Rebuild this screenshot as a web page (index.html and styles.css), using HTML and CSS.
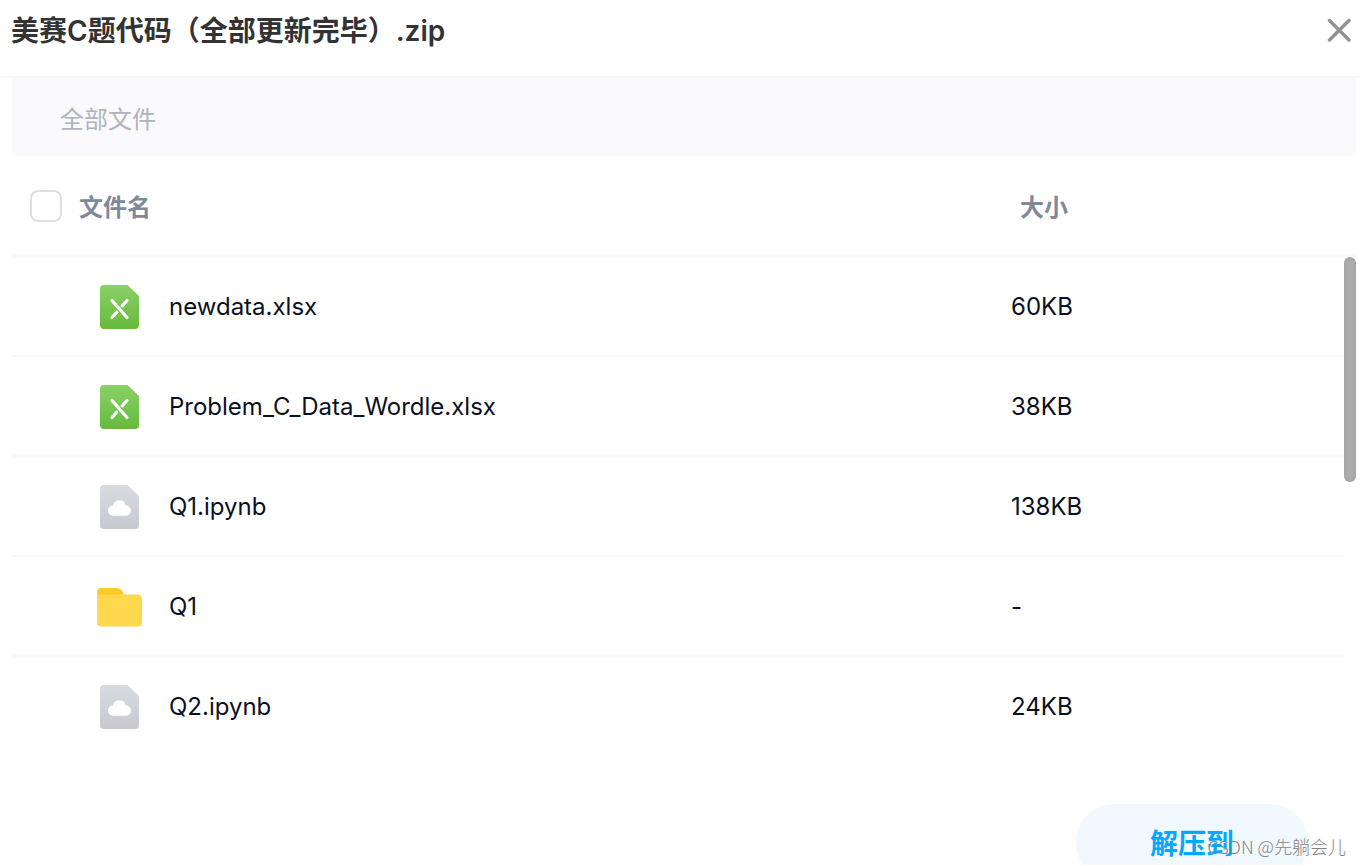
FILE: index.html
```html
<!DOCTYPE html>
<html lang="zh-CN">
<head>
    <meta charset="UTF-8">
    <meta name="viewport" content="width=device-width, initial-scale=1.0">
    <title>美赛C题代码（全部更新完毕）.zip</title>
    <link rel="stylesheet" href="styles.css">
</head>
<body>
    <svg class="sprite" aria-hidden="true">
        <defs>
            <linearGradient id="green" x1="0" y1="0" x2="0" y2="1">
                <stop offset="0" stop-color="#8ad068"/>
                <stop offset="1" stop-color="#66ba3c"/>
            </linearGradient>
            <linearGradient id="gray" x1="0" y1="0" x2="0" y2="1">
                <stop offset="0" stop-color="#d7dce1"/>
                <stop offset="1" stop-color="#c8c8d1"/>
            </linearGradient>
        </defs>
        <symbol id="icon-excel" viewBox="0 0 48 48">
            <path fill="url(#green)" d="M9 3H32.500L44 14V43a4 4 0 0 1-4 4H9a4 4 0 0 1-4-4V7a4 4 0 0 1 4-4z"/>
            <g fill="none" stroke="#fff" stroke-width="3.200" stroke-linecap="round">
                <path d="M17 18.500L32 35.500"/>
                <path d="M32 18.500L27.200 23.900"/>
                <path d="M21.800 30.100L17 35.500"/>
            </g>
        </symbol>
        <symbol id="icon-file" viewBox="0 0 48 48">
            <path fill="url(#gray)" d="M9 3H32.500L44 14V43a4 4 0 0 1-4 4H9a4 4 0 0 1-4-4V7a4 4 0 0 1 4-4z"/>
            <path fill="#fff" d="M18.200 33.800a5.200 5.200 0 0 1-.1-10.400 6.400 6.400 0 0 1 12.600 0A5.200 5.200 0 0 1 30.800 33.800z"/>
        </symbol>
        <symbol id="icon-folder" viewBox="0 0 48 48">
            <path fill="#ffca28" d="M2 16V10a4 4 0 0 1 4-4H20.500c5 0 7.500 2.500 8.500 7v4z"/>
            <path fill="#ffd84d" d="M2 12.500H42.500a4.500 4.500 0 0 1 4.500 4.500v23.500a4 4 0 0 1-4 4H6a4 4 0 0 1-4-4z"/>
        </symbol>
    </svg>

    <div class="dialog">
        <header class="dialog-header">
            <h1>美赛C题代码（全部更新完毕）.zip</h1>
            <button type="button" class="close" aria-label="关闭">
                <svg viewBox="0 0 24 24" width="24" height="24">
                    <path d="M2.500 2.500L22 22M22 2.500L2.500 22" fill="none" stroke="#929292" stroke-width="3.400" stroke-linecap="round"/>
                </svg>
            </button>
        </header>

        <main>
            <nav class="breadcrumb"><a href="#">全部文件</a></nav>

            <div class="file-list">
                <table>
                    <colgroup>
                        <col>
                        <col class="col-size">
                        <col class="col-gutter">
                    </colgroup>
                    <thead>
                        <tr>
                            <th scope="col">
                                <label class="check-all"><input type="checkbox">文件名</label>
                            </th>
                            <th scope="col" colspan="2" class="size">大小</th>
                        </tr>
                    </thead>
                    <tbody>
                        <tr>
                            <td><div class="file"><svg class="icon"><use href="#icon-excel"/></svg>newdata.xlsx</div></td>
                            <td>60KB</td>
                        </tr>
                        <tr>
                            <td><div class="file"><svg class="icon"><use href="#icon-excel"/></svg>Problem_C_Data_Wordle.xlsx</div></td>
                            <td>38KB</td>
                        </tr>
                        <tr>
                            <td><div class="file"><svg class="icon"><use href="#icon-file"/></svg>Q1.ipynb</div></td>
                            <td>138KB</td>
                        </tr>
                        <tr>
                            <td><div class="file"><svg class="icon"><use href="#icon-folder"/></svg>Q1</div></td>
                            <td>-</td>
                        </tr>
                        <tr>
                            <td><div class="file"><svg class="icon"><use href="#icon-file"/></svg>Q2.ipynb</div></td>
                            <td>24KB</td>
                        </tr>
                    </tbody>
                </table>
                <div class="scroll-thumb"></div>
            </div>
        </main>

        <footer>
            <button type="button" class="extract">解压到</button>
        </footer>
        <div class="watermark">CSDN @先躺会儿</div>
    </div>
</body>
</html>
```
FILE: styles.css
```css
:root {
    --text: #0a1023;
    --title: #333333;
    --muted: #818999;
    --placeholder: #afb3bf;
    --line: #f9f9fa;
    --primary: #06a7ff;
}

* {
    margin: 0;
    padding: 0;
    box-sizing: border-box;
}

body {
    font-family: Inter, "Noto Sans CJK SC", sans-serif;
    font-size: 24px;
    color: var(--text);
    background: #fff;
}

button {
    font-family: inherit;
    border: none;
    cursor: pointer;
}

.sprite {
    position: absolute;
    width: 0;
    height: 0;
}

.dialog {
    position: relative;
    height: 100vh;
    overflow: hidden;
}

.dialog-header {
    display: flex;
    align-items: flex-start;
    justify-content: space-between;
    height: 78px;
    padding: 11px 8px 0 11px;
    border-bottom: 2px solid #f6f6fb;
}

.dialog-header h1 {
    font-size: 28px;
    font-weight: 600;
    line-height: 40px;
    color: var(--title);
}

.close {
    display: flex;
    padding: 7px 2px;
    background: none;
}

main {
    padding: 0 5px 0 12px;
}

.breadcrumb {
    height: 78px;
    padding: 0 48px;
    line-height: 84px;
    background: #fafafc;
    border-radius: 4px 4px 0 0;
}

.breadcrumb a {
    color: var(--placeholder);
    text-decoration: none;
}

.file-list {
    position: relative;
}

table {
    width: 100%;
    table-layout: fixed;
    border-collapse: separate;
    border-spacing: 0;
}

.col-size {
    width: 333px;
}

.col-gutter {
    width: 12px;
}

th,
td {
    height: 100px;
    text-align: left;
    vertical-align: middle;
    border-bottom: 2px solid var(--line);
}

th {
    height: 101px;
    font-weight: 700;
    color: var(--muted);
}

th.size {
    padding-left: 9px;
}

tbody tr:last-child td {
    border-bottom-color: transparent;
}

.check-all {
    display: flex;
    align-items: center;
    gap: 17px;
    padding-left: 18px;
}

.check-all input {
    appearance: none;
    width: 32px;
    height: 32px;
    border: 2px solid #dcdfe6;
    border-radius: 8px;
    background: #fff;
}

.file {
    display: flex;
    align-items: center;
    gap: 26px;
    padding-left: 83px;
}

.icon {
    width: 48px;
    height: 48px;
}

.scroll-thumb {
    position: absolute;
    top: 101px;
    right: 0;
    width: 12px;
    height: 225px;
    border-radius: 6px;
    background: #adadad;
    box-shadow: inset 0 0 5px rgba(0, 0, 0, 0.1);
}

footer {
    display: flex;
    justify-content: flex-end;
    padding: 47px 53px 0;
}

.extract {
    width: 232px;
    height: 76px;
    border-radius: 38px;
    font-size: 28px;
    font-weight: 700;
    color: var(--primary);
    background: #f1f9ff;
}

.watermark {
    position: absolute;
    right: 15px;
    bottom: 7px;
    font-family: "Noto Sans CJK SC", sans-serif;
    font-size: 18px;
    font-weight: 300;
    line-height: 24px;
    color: #858585;
    text-shadow: 1px 1px 0 rgba(255, 255, 255, 0.7);
}
```
